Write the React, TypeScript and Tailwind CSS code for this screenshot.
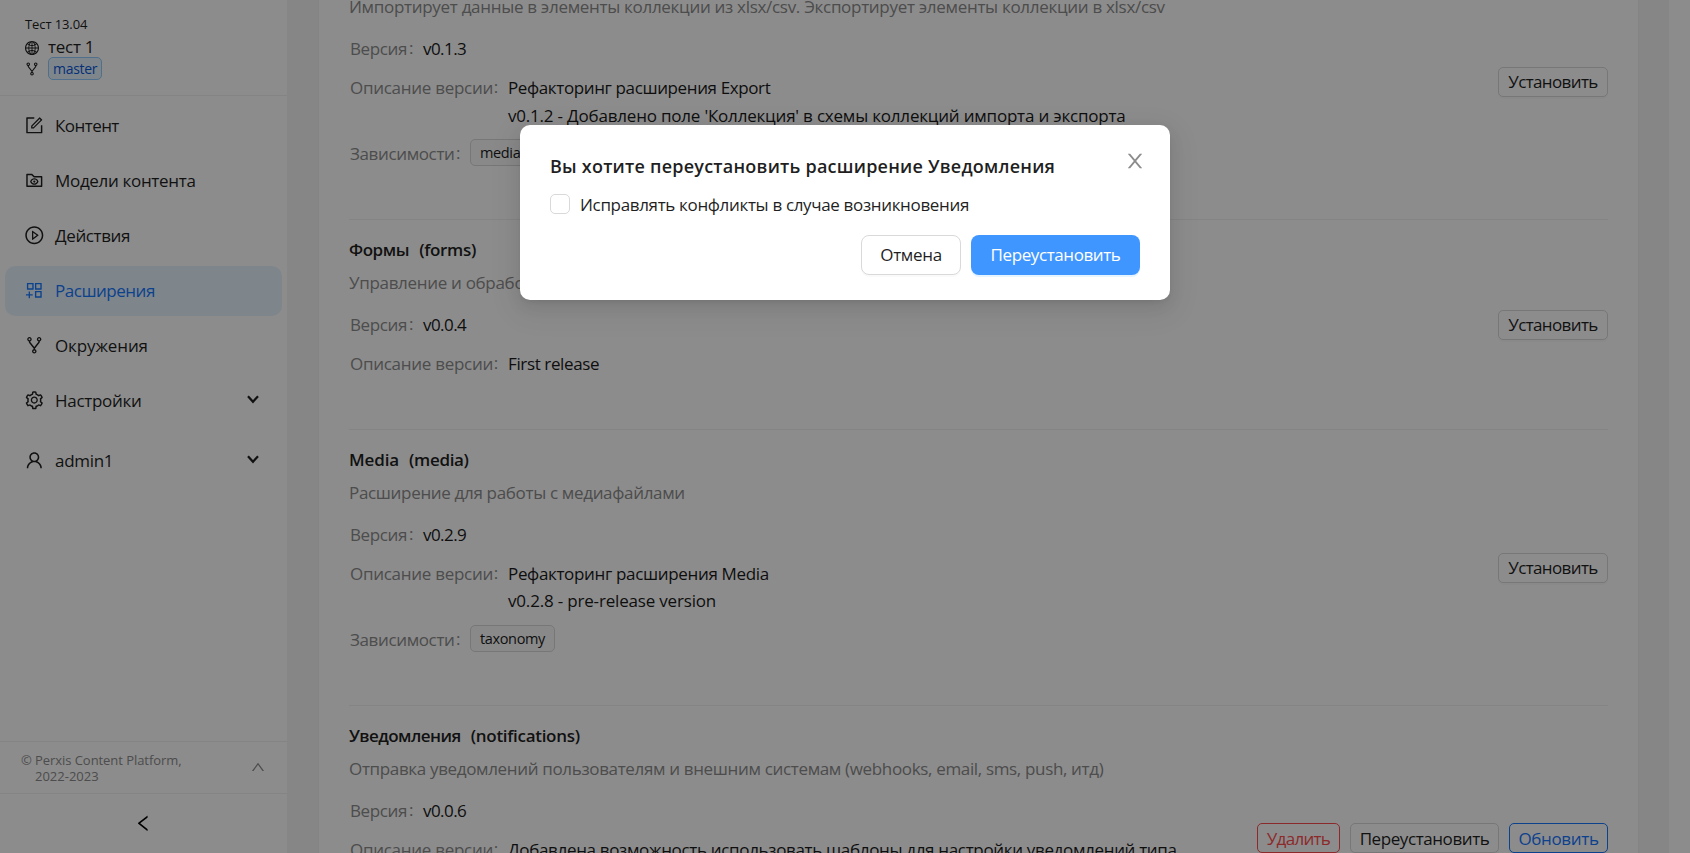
import React from "react";
import type { ReactNode } from "react";
import type { IconType } from "react-icons";
import {
  AiOutlineAppstoreAdd,
  AiOutlineFolderView,
  AiOutlineFork,
  AiOutlineForm,
  AiOutlineGlobal,
  AiOutlineLeft,
  AiOutlinePlayCircle,
  AiOutlineSetting,
  AiOutlineUp,
  AiOutlineUser,
} from "react-icons/ai";

function Chevron() {
  return (
    <svg width="12" height="9" viewBox="0 0 12 9" fill="none" className="-mt-[3px]">
      <path d="M1 1.2 6 6.8 11 1.2" stroke="#1f1f1f" strokeWidth="2.2" />
    </svg>
  );
}

function CloseIcon() {
  return (
    <svg viewBox="64 64 896 896" fill="currentColor" className="mt-px -mr-[5px] size-5 shrink-0 text-[#8c8c8c]">
      <path d="M563.8 512l262.5-312.9c4.4-5.2.7-13.1-6.1-13.1h-79.8c-4.7 0-9.2 2.1-12.3 5.7L511.6 449.8 295.1 191.7c-3-3.6-7.5-5.7-12.3-5.7H203c-6.8 0-10.5 7.9-6.1 13.1L459.4 512 196.9 824.9A7.95 7.95 0 0 0 203 838h79.8c4.7 0 9.2-2.1 12.3-5.7l216.5-258.1 216.5 258.1c3 3.6 7.5 5.7 12.3 5.7h79.8c6.8 0 10.5-7.9 6.1-13.1L563.8 512z" />
    </svg>
  );
}

interface MenuItemProps {
  icon: IconType;
  label: string;
  tracking: string;
  active?: boolean;
  expandable?: boolean;
}

function MenuItem({ icon: Icon, label, tracking, active, expandable }: MenuItemProps) {
  return (
    <li
      className={`flex h-[50px] items-center rounded-[10px] pr-[23px] pl-5 ${
        active ? "bg-[#e6f4ff] text-[#1677ff]" : "text-[#1f1f1f]"
      }`}
    >
      <Icon className="-mx-[1.3px] -mt-px size-[20.6px] shrink-0" />
      <span className={`ml-3 grow ${tracking}`}>{label}</span>
      {expandable && <Chevron />}
    </li>
  );
}

function Sidebar() {
  return (
    <aside className="flex h-full w-[287px] shrink-0 flex-col bg-white">
      <div className="flex h-24 flex-col border-b border-[#f0f0f0] pt-[14px] pl-6 text-[#1f1f1f]">
        <div className="pl-px text-[13px] leading-5 tracking-[-0.1px]">Тест 13.04</div>
        <div className="mt-[3px] flex h-[22px] items-center">
          <AiOutlineGlobal className="size-4" />
          <span className="-mt-[3px] ml-2 tracking-[-0.25px]">тест 1</span>
        </div>
        <div className="-mt-0.5 flex h-[23px] items-center">
          <AiOutlineFork className="size-4" />
          <span className="ml-2 flex h-[23px] items-center rounded-[5px] border border-[#91caff] bg-[#e6f4ff] px-1 text-[14px] tracking-[-0.3px] text-[#0958d9]">
            master
          </span>
        </div>
      </div>
      <ul className="flex flex-col gap-[5px] px-[5px] pt-[5px]">
        <MenuItem icon={AiOutlineForm} label="Контент" tracking="tracking-[-0.55px]" />
        <MenuItem icon={AiOutlineFolderView} label="Модели контента" tracking="tracking-[-0.32px]" />
        <MenuItem icon={AiOutlinePlayCircle} label="Действия" tracking="tracking-[-0.38px]" />
        <MenuItem icon={AiOutlineAppstoreAdd} label="Расширения" tracking="tracking-[-0.48px]" active />
        <MenuItem icon={AiOutlineFork} label="Окружения" tracking="tracking-[-0.12px]" />
        <MenuItem icon={AiOutlineSetting} label="Настройки" tracking="tracking-[-0.3px]" expandable />
      </ul>
      <ul className="px-[5px] pt-[10px]">
        <MenuItem icon={AiOutlineUser} label="admin1" tracking="tracking-[-0.3px]" expandable />
      </ul>
      <div className="mt-auto flex h-[52px] items-center justify-between border-t border-[#f0f0f0] pr-[21px] pl-[21px] text-[#8c8c8c]">
        <div className="text-[13px] leading-4">
          <div className="tracking-[-0.06px]">© Perxis Content Platform,</div>
          <div className="pl-[14px]">2022-2023</div>
        </div>
        <AiOutlineUp className="mb-0.5 size-4" />
      </div>
      <div className="flex h-[60px] items-center justify-center border-t border-[#f0f0f0]">
        <AiOutlineLeft className="size-[20.6px] text-black" />
      </div>
    </aside>
  );
}

interface ButtonProps {
  children: ReactNode;
  tone?: string;
}

function SmallButton({ children, tone = "border-[#d9d9d9] text-[#1f1f1f] tracking-[-0.62px] w-[110px]" }: ButtonProps) {
  return (
    <button
      type="button"
      className={`flex h-[30px] items-center justify-center rounded-[5px] border bg-white pt-px whitespace-nowrap shadow-[0_2px_0_rgba(0,0,0,0.02)] ${tone}`}
    >
      {children}
    </button>
  );
}

interface FieldProps {
  label: string;
  labelClass: string;
  children: ReactNode;
}

function Field({ label, labelClass, children }: FieldProps) {
  return (
    <div className="flex min-h-7 leading-[27px]">
      <div className={`flex shrink-0 justify-between pr-[10px] pl-px text-[#8c8c8c] ${labelClass}`}>
        <span>{label}</span>
        <span className="-mt-px">:</span>
      </div>
      <div className="text-[#1a1a1a]">{children}</div>
    </div>
  );
}

interface ExtensionProps {
  name?: string;
  nameClass?: string;
  id?: string;
  idClass?: string;
  summary: string;
  summaryClass: string;
  version: string;
  notes: { text: string; className: string }[];
  dependency?: string;
  actions: ReactNode;
}

function Extension(props: ExtensionProps) {
  return (
    <section className="flex items-center justify-between border-b border-[#f0f0f0] pt-4">
      <div className="grow whitespace-nowrap">
        <h3 className="flex h-7 gap-[10px] leading-[27px] font-semibold text-[#1f1f1f]">
          <span className={props.nameClass}>{props.name}</span>
          <span className={props.idClass}>{props.id}</span>
        </h3>
        <p className={`mt-[5px] h-7 leading-[27px] text-[#8c8c8c] ${props.summaryClass}`}>{props.summary}</p>
        <div className="mt-[14px] flex flex-col gap-[11px]">
          <Field label="Версия" labelClass="w-[74px] tracking-[-0.38px]">
            <span className="tracking-[-0.55px]">{props.version}</span>
          </Field>
          <Field label="Описание версии" labelClass="w-[159px] tracking-[-0.28px]">
            {props.notes.map((note, index) => (
              <div key={note.text} className={`${note.className} ${index === 1 ? "h-[27px]" : "h-7"}`}>
                {note.text}
              </div>
            ))}
          </Field>
          {props.dependency && (
            <Field label="Зависимости" labelClass="w-[121px] tracking-[-0.37px]">
              <span className="-mt-px flex h-[27px] items-center rounded-[5px] border border-[#d9d9d9] bg-[#fafafa] px-[9px] text-[14.5px] tracking-[-0.36px]">
                {props.dependency}
              </span>
            </Field>
          )}
        </div>
        <div className="h-[51px]" />
      </div>
      <div className="-mt-4 flex gap-[10px]">{props.actions}</div>
    </section>
  );
}

function ExtensionList() {
  return (
    <div className="ml-[31px] h-full w-[1321px] overflow-hidden border-x border-[#f0f0f0] bg-white px-[30px]">
      <div className="-mt-[56px]">
        <Extension
          summary="Импортирует данные в элементы коллекции из xlsx/csv. Экспортирует элементы коллекции в xlsx/csv"
          summaryClass="tracking-[-0.3px]"
          version="v0.1.3"
          notes={[
            { text: "Рефакторинг расширения Export", className: "tracking-[-0.38px]" },
            {
              text: "v0.1.2 - Добавлено поле 'Коллекция' в схемы коллекций импорта и экспорта",
              className: "tracking-[-0.2px]",
            },
          ]}
          dependency="media"
          actions={<SmallButton>Установить</SmallButton>}
        />
        <Extension
          name="Формы"
          nameClass="tracking-[-0.42px]"
          id="(forms)"
          idClass="tracking-[-0.33px]"
          summary="Управление и обработка форм"
          summaryClass="tracking-[-0.31px]"
          version="v0.0.4"
          notes={[{ text: "First release", className: "tracking-[-0.37px]" }]}
          actions={<SmallButton>Установить</SmallButton>}
        />
        <Extension
          name="Media"
          nameClass="tracking-[-0.12px]"
          id="(media)"
          idClass="tracking-[-0.35px]"
          summary="Расширение для работы с медиафайлами"
          summaryClass="tracking-[-0.33px]"
          version="v0.2.9"
          notes={[
            { text: "Рефакторинг расширения Media", className: "tracking-[-0.34px]" },
            { text: "v0.2.8 - pre-release version", className: "tracking-[-0.18px] leading-[25px]" },
          ]}
          dependency="taxonomy"
          actions={<SmallButton>Установить</SmallButton>}
        />
        <Extension
          name="Уведомления"
          nameClass="tracking-[-0.54px]"
          id="(notifications)"
          idClass="tracking-[-0.3px]"
          summary="Отправка уведомлений пользователям и внешним системам (webhooks, email, sms, push, итд)"
          summaryClass="tracking-[-0.34px]"
          version="v0.0.6"
          notes={[
            {
              text: "Добавлена возможность использовать шаблоны для настройки уведомлений типа",
              className: "tracking-[-0.33px]",
            },
            { text: "email", className: "" },
            { text: "", className: "" },
          ]}
          actions={
            <>
              <SmallButton tone="w-[83px] border-[#ff4d4f] text-[#ff4d4f] tracking-[-0.7px]">Удалить</SmallButton>
              <SmallButton tone="w-[149px] border-[#d9d9d9] text-[#1f1f1f] tracking-[-0.42px]">
                Переустановить
              </SmallButton>
              <SmallButton tone="w-[99px] border-[#1677ff] text-[#1677ff] tracking-[-0.34px]">Обновить</SmallButton>
            </>
          }
        />
      </div>
    </div>
  );
}

function ReinstallDialog() {
  return (
    <div className="absolute inset-0 flex items-start justify-center bg-black/45 pt-[125px]">
      <div
        role="dialog"
        className="h-[175px] w-[650px] rounded-[10px] bg-white px-[30px] pt-[25px] text-[#1f1f1f] shadow-[0_6px_16px_0_rgba(0,0,0,0.08),0_3px_6px_-4px_rgba(0,0,0,0.12),0_9px_28px_8px_rgba(0,0,0,0.05)]"
      >
        <div className="flex items-start justify-between">
          <h2 className="mt-0.5 text-[18px] leading-7 font-semibold tracking-[0.23px] whitespace-nowrap">
            Вы хотите переустановить расширение Уведомления
          </h2>
          <CloseIcon />
        </div>
        <label className="mt-[10px] flex h-7 items-center">
          <span className="-mt-px size-5 rounded-[5px] border border-[#d9d9d9] bg-white" />
          <span className="mt-px ml-[10px] tracking-[-0.34px] whitespace-nowrap">
            Исправлять конфликты в случае возникновения
          </span>
        </label>
        <div className="mt-[17px] flex justify-end gap-[10px]">
          <button
            type="button"
            className="flex h-10 w-[100px] items-center justify-center rounded-[8px] border border-[#d9d9d9] bg-white tracking-[-0.32px] shadow-[0_2px_0_rgba(0,0,0,0.02)]"
          >
            Отмена
          </button>
          <button
            type="button"
            className="flex h-10 w-[169px] items-center justify-center rounded-[8px] bg-[#4096ff] tracking-[-0.4px] text-white shadow-[0_2px_0_rgba(5,145,255,0.1)]"
          >
            Переустановить
          </button>
        </div>
      </div>
    </div>
  );
}

export default function App() {
  return (
    <div className="relative flex h-[853px] w-[1690px] overflow-hidden bg-white font-['Open_Sans','Noto_Sans',sans-serif] text-[17px]">
      <Sidebar />
      <main className="h-full w-[1382px] shrink-0 bg-[#f5f5f5]">
        <ExtensionList />
      </main>
      <ReinstallDialog />
    </div>
  );
}
